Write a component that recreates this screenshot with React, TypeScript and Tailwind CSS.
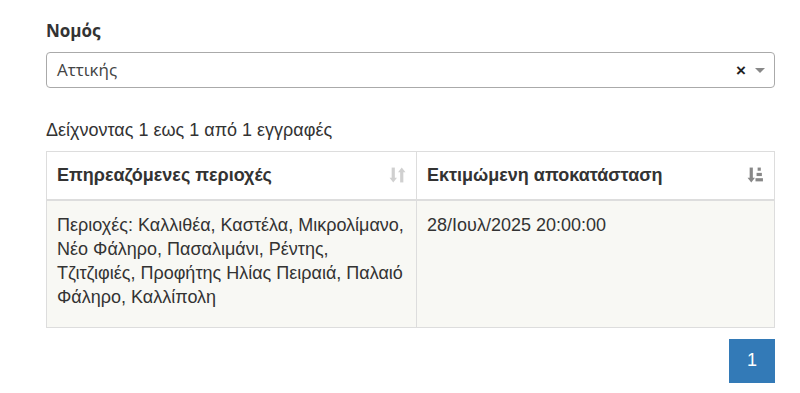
function SortBothIcon() {
  return (
    <svg width="17" height="20" viewBox="0 0 16 18" className="text-[#d0d0d0]">
      <path d="M4 2v11" stroke="currentColor" strokeWidth="3" />
      <path d="M0.5 11.5h7L4 16z" fill="currentColor" />
      <path d="M12 16V5" stroke="currentColor" strokeWidth="3" />
      <path d="M8.5 6.5h7L12 2z" fill="currentColor" />
    </svg>
  );
}

function SortDescIcon() {
  return (
    <svg width="17" height="20" viewBox="0 0 16 18" className="text-[#888]">
      <path d="M4 2v11" stroke="currentColor" strokeWidth="3" />
      <path d="M0.5 11.5h7L4 16z" fill="currentColor" />
      <rect x="10" y="2" width="3" height="3" fill="currentColor" />
      <rect x="9" y="7" width="5" height="3" fill="currentColor" />
      <rect x="8" y="12" width="7" height="3" fill="currentColor" />
    </svg>
  );
}

export default function App() {
  const sans = { fontFamily: '"Liberation Sans", Arial, sans-serif' };
  const open = { fontFamily: '"Open Sans", sans-serif' };

  return (
    <div className="w-[800px] h-[393px] bg-white pl-[46px] pr-[25px] pt-[19px]" style={sans}>
      <label className="block text-[17px] leading-[24px] font-bold text-[#333] mb-[9px]" style={open}>
        Νομός
      </label>
      <div className="flex items-center h-[36px] border border-[#aaa] rounded-[4px] pl-[10px] pr-[9px]">
        <span className="flex-1 text-[17px] text-[#444]" style={open}>
          Αττικής
        </span>
        <span className="text-[17px] font-bold text-[#222] mr-[9px] leading-none">×</span>
        <span className="w-0 h-0 border-l-[5px] border-r-[5px] border-t-[5px] border-l-transparent border-r-transparent border-t-[#888]" />
      </div>

      <div className="mt-[30px] text-[18px] text-[#333] leading-[24px]">
        Δείχνοντας 1 εως 1 από 1 εγγραφές
      </div>

      <table className="mt-[9px] w-full border-collapse border border-[#ddd] text-[18px] text-[#333]">
        <thead>
          <tr>
            <th className="w-[370px] border border-[#ddd] border-b-2 h-[48px] px-[10px] text-left font-bold">
              <div className="flex items-center justify-between">
                <span>Επηρεαζόμενες περιοχές</span>
                <SortBothIcon />
              </div>
            </th>
            <th className="border border-[#ddd] border-b-2 h-[48px] px-[10px] text-left font-bold">
              <div className="flex items-center justify-between">
                <span>Εκτιμώμενη αποκατάσταση</span>
                <SortDescIcon />
              </div>
            </th>
          </tr>
        </thead>
        <tbody>
          <tr className="bg-[#f8f8f4]">
            <td className="border border-[#ddd] px-[10px] pt-[12px] pb-[18px] align-top leading-[24px]">
              Περιοχές: Καλλιθέα, Καστέλα, Μικρολίμανο, Νέο Φάληρο, Πασαλιμάνι, Ρέντης,
              Τζιτζιφιές, Προφήτης Ηλίας Πειραιά, Παλαιό Φάληρο, Καλλίπολη
            </td>
            <td className="border border-[#ddd] px-[10px] pt-[12px] pb-[18px] align-top leading-[24px]">
              28/Ιουλ/2025 20:00:00
            </td>
          </tr>
        </tbody>
      </table>

      <div className="flex justify-end mt-[11px]">
        <div className="w-[46px] h-[44px] bg-[#337ab7] border border-[#337ab7] text-white text-[18px] flex items-center justify-center">
          1
        </div>
      </div>
    </div>
  );
}
